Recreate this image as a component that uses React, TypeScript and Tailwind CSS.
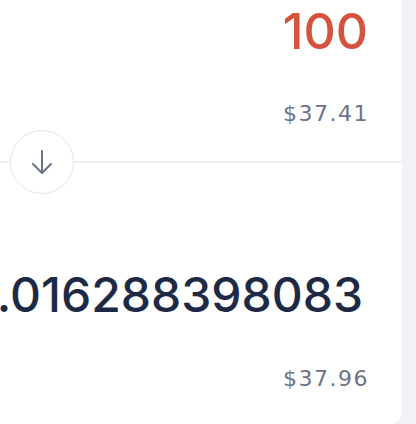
import React from "react";

export default function App() {
  return (
    <div className="w-[416px] h-[424px] bg-[#f1f2f7] flex overflow-hidden" style={{ fontFamily: "Inter, 'Liberation Sans', sans-serif" }}>
      <div className="w-[402px] h-[424px] bg-white rounded-br-[12px] flex flex-col">
        <div className="flex flex-col items-end pr-[34px] pt-[6px]">
          <div className="text-[50px] leading-[50px] font-medium text-[#d5533d]">100</div>
          <div className="mt-[47px] text-[22px] leading-[22px] tracking-[1.5px] mr-[-1px] text-[#6b7387]" style={{ fontFamily: "'DejaVu Sans', sans-serif" }}>$37.41</div>
        </div>
        <div className="relative mt-[36px] h-[2px] bg-[#eeeff5]">
          <div className="absolute left-[10px] top-[-31px] w-[64px] h-[64px] rounded-full border border-[#e3e4ee] bg-white flex items-center justify-center">
            <svg width="30" height="30" viewBox="0 0 24 24" fill="none" stroke="#6b7387" strokeWidth="1.6" strokeLinecap="round" strokeLinejoin="round">
              <path d="M12 3.2V20.8" />
              <path d="M19.2 13.6 12 20.8 4.8 13.6" />
            </svg>
          </div>
        </div>
        <div className="flex flex-col items-end pr-[34px]">
          <div className="mt-[108px] w-full flex justify-end overflow-hidden pr-[5px]">
            <div className="shrink-0 whitespace-nowrap text-[48px] leading-[48px] font-medium text-[#1e2a45]">0.016288398083</div>
          </div>
          <div className="mt-[49px] text-[22px] leading-[22px] tracking-[1.5px] mr-[-1px] text-[#6b7387]" style={{ fontFamily: "'DejaVu Sans', sans-serif" }}>$37.96</div>
        </div>
      </div>
    </div>
  );
}
